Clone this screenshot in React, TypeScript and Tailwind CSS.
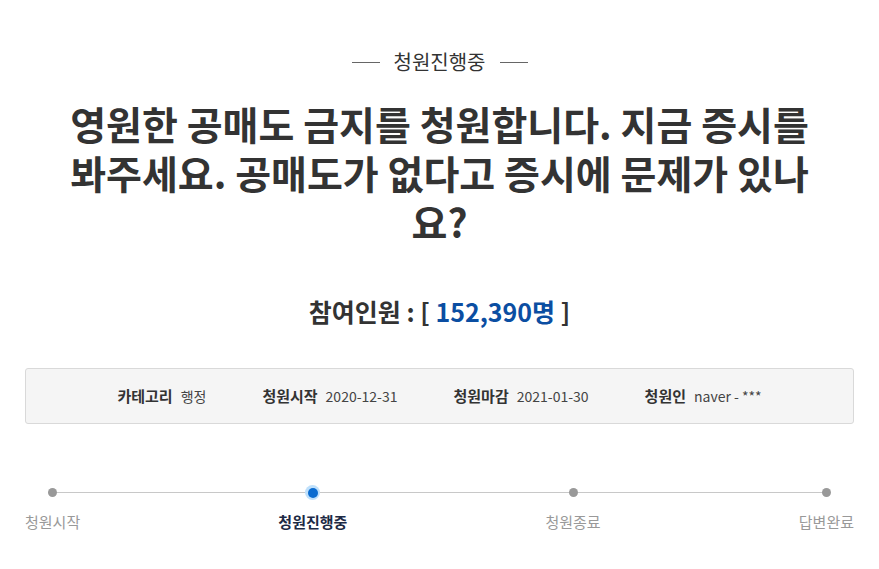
const steps = [
  { label: "청원시작", active: false },
  { label: "청원진행중", active: true },
  { label: "청원종료", active: false },
  { label: "답변완료", active: false },
];

const info = [
  { label: "카테고리", value: "행정" },
  { label: "청원시작", value: "2020-12-31" },
  { label: "청원마감", value: "2021-01-30" },
  { label: "청원인", value: "naver - ***" },
];

export default function App() {
  return (
    <div className="min-h-screen bg-white px-[25px] pt-[47px] font-['Noto_Sans_CJK_KR','Noto_Sans',sans-serif] text-[#333]">
      <div className="flex items-center justify-center gap-[14px]">
        <span className="h-px w-[28px] bg-[#666]" />
        <span className="text-[20px] leading-[30px] text-[#333]">청원진행중</span>
        <span className="h-px w-[28px] bg-[#666]" />
      </div>

      <h1 className="mx-auto mt-[22px] max-w-[755px] text-center text-[39px] font-bold leading-[49px] text-[#333]">
        영원한 공매도 금지를 청원합니다. 지금 증시를 봐주세요. 공매도가 없다고 증시에 문제가 있나요?
      </h1>

      <div className="mt-[47px] text-center text-[25px] font-bold leading-[36px] text-[#333]">
        참여인원 : [ <span className="text-[#0b4ea2]">152,390명</span> ]
      </div>

      <div className="mt-[39px] flex h-[56px] items-center justify-center gap-[56px] rounded-[3px] border border-[#d9d9d9] bg-[#f5f5f5]">
        {info.map((it) => (
          <div key={it.label} className="flex items-center gap-[8px]">
            <span className="text-[15px] font-bold text-[#333]">{it.label}</span>
            <span className="text-[14px] text-[#444]">{it.value}</span>
          </div>
        ))}
      </div>

      <div className="relative mt-[62px]">
        <div className="absolute left-[27px] right-[28px] top-[6px] h-px bg-[#c8c8c8]" />
        <div className="relative flex justify-between">
          {steps.map((s) => (
            <div key={s.label} className="flex flex-col items-center">
              <div className="flex h-[13px] w-[16px] items-center justify-center">
                {s.active ? (
                  <span className="flex h-[15px] w-[15px] items-center justify-center rounded-full bg-[#bfe0fb]">
                    <span className="h-[10px] w-[10px] rounded-full bg-[#0a6bd0]" />
                  </span>
                ) : (
                  <span className="h-[9px] w-[9px] rounded-full bg-[#999]" />
                )}
              </div>
              <span
                className={
                  s.active
                    ? "mt-[12px] text-[15px] font-bold leading-[22px] text-[#1d2a45]"
                    : "mt-[12px] text-[15px] leading-[22px] text-[#999]"
                }
              >
                {s.label}
              </span>
            </div>
          ))}
        </div>
      </div>
    </div>
  );
}
